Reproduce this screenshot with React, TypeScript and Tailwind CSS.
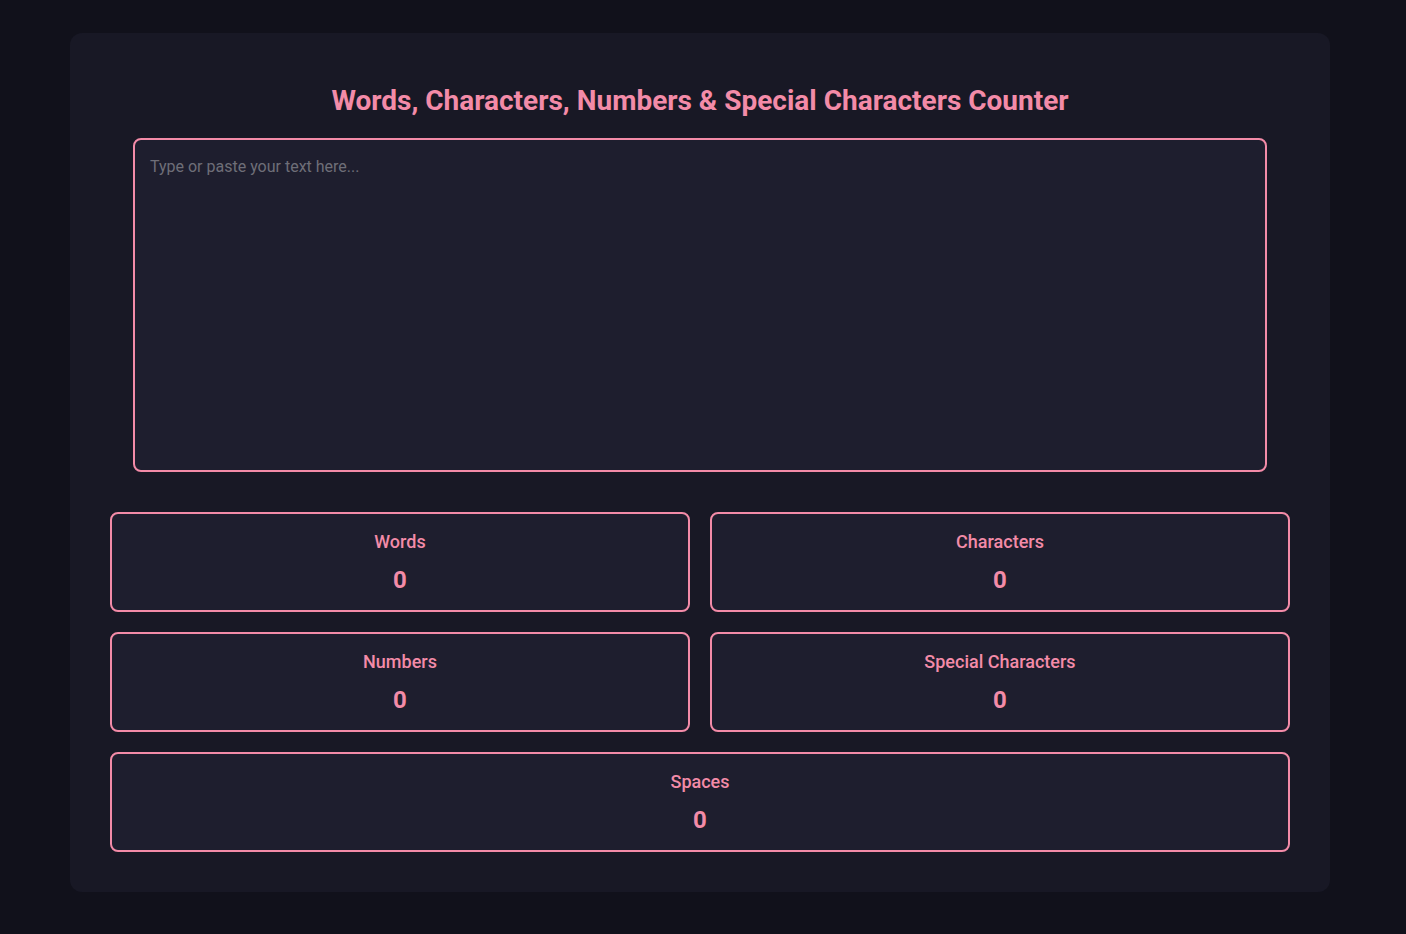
import React, { useState } from "react";

function Stat({ label, value }: { label: string; value: number }) {
  return (
    <div className="flex flex-col items-center rounded-lg border-2 border-[#f38ba8] bg-[#1e1e2e] pt-[17px] h-[100px]">
      <div className="text-[18px] leading-[22px] font-medium text-[#f38ba8]">{label}</div>
      <div className="mt-[13px] text-[24px] leading-[28px] font-bold text-[#f38ba8]">{value}</div>
    </div>
  );
}

export default function App() {
  const [text, setText] = useState("");
  const words = text.trim() ? text.trim().split(/\s+/).length : 0;
  const chars = text.length;
  const numbers = (text.match(/[0-9]/g) || []).length;
  const special = (text.match(/[^a-zA-Z0-9\s]/g) || []).length;
  const spaces = (text.match(/ /g) || []).length;
  return (
    <div className="min-h-[934px] bg-[#11111b] pt-[33px] pb-[42px]" style={{ fontFamily: "Roboto, 'Noto Sans', sans-serif" }}>
      <div className="ml-[70px] w-[1260px] rounded-xl bg-[#181825] p-10">
        <h1 className="mt-[11px] mb-[20px] text-center text-[28px] leading-[34px] font-bold text-[#f38ba8]">
          Words, Characters, Numbers &amp; Special Characters Counter
        </h1>
        <textarea
          value={text}
          onChange={(e) => setText(e.target.value)}
          placeholder="Type or paste your text here..."
          className="mx-auto block h-[334px] w-[1134px] resize-none rounded-lg border-2 border-[#f38ba8] bg-[#1e1e2e] px-[15px] py-[15px] text-[16px] text-[#cdd6f4] outline-none placeholder:text-[#6e6e78]"
        />
        <div className="mt-10 grid grid-cols-2 gap-5">
          <Stat label="Words" value={words} />
          <Stat label="Characters" value={chars} />
          <Stat label="Numbers" value={numbers} />
          <Stat label="Special Characters" value={special} />
          <div className="col-span-2">
            <Stat label="Spaces" value={spaces} />
          </div>
        </div>
      </div>
    </div>
  );
}
